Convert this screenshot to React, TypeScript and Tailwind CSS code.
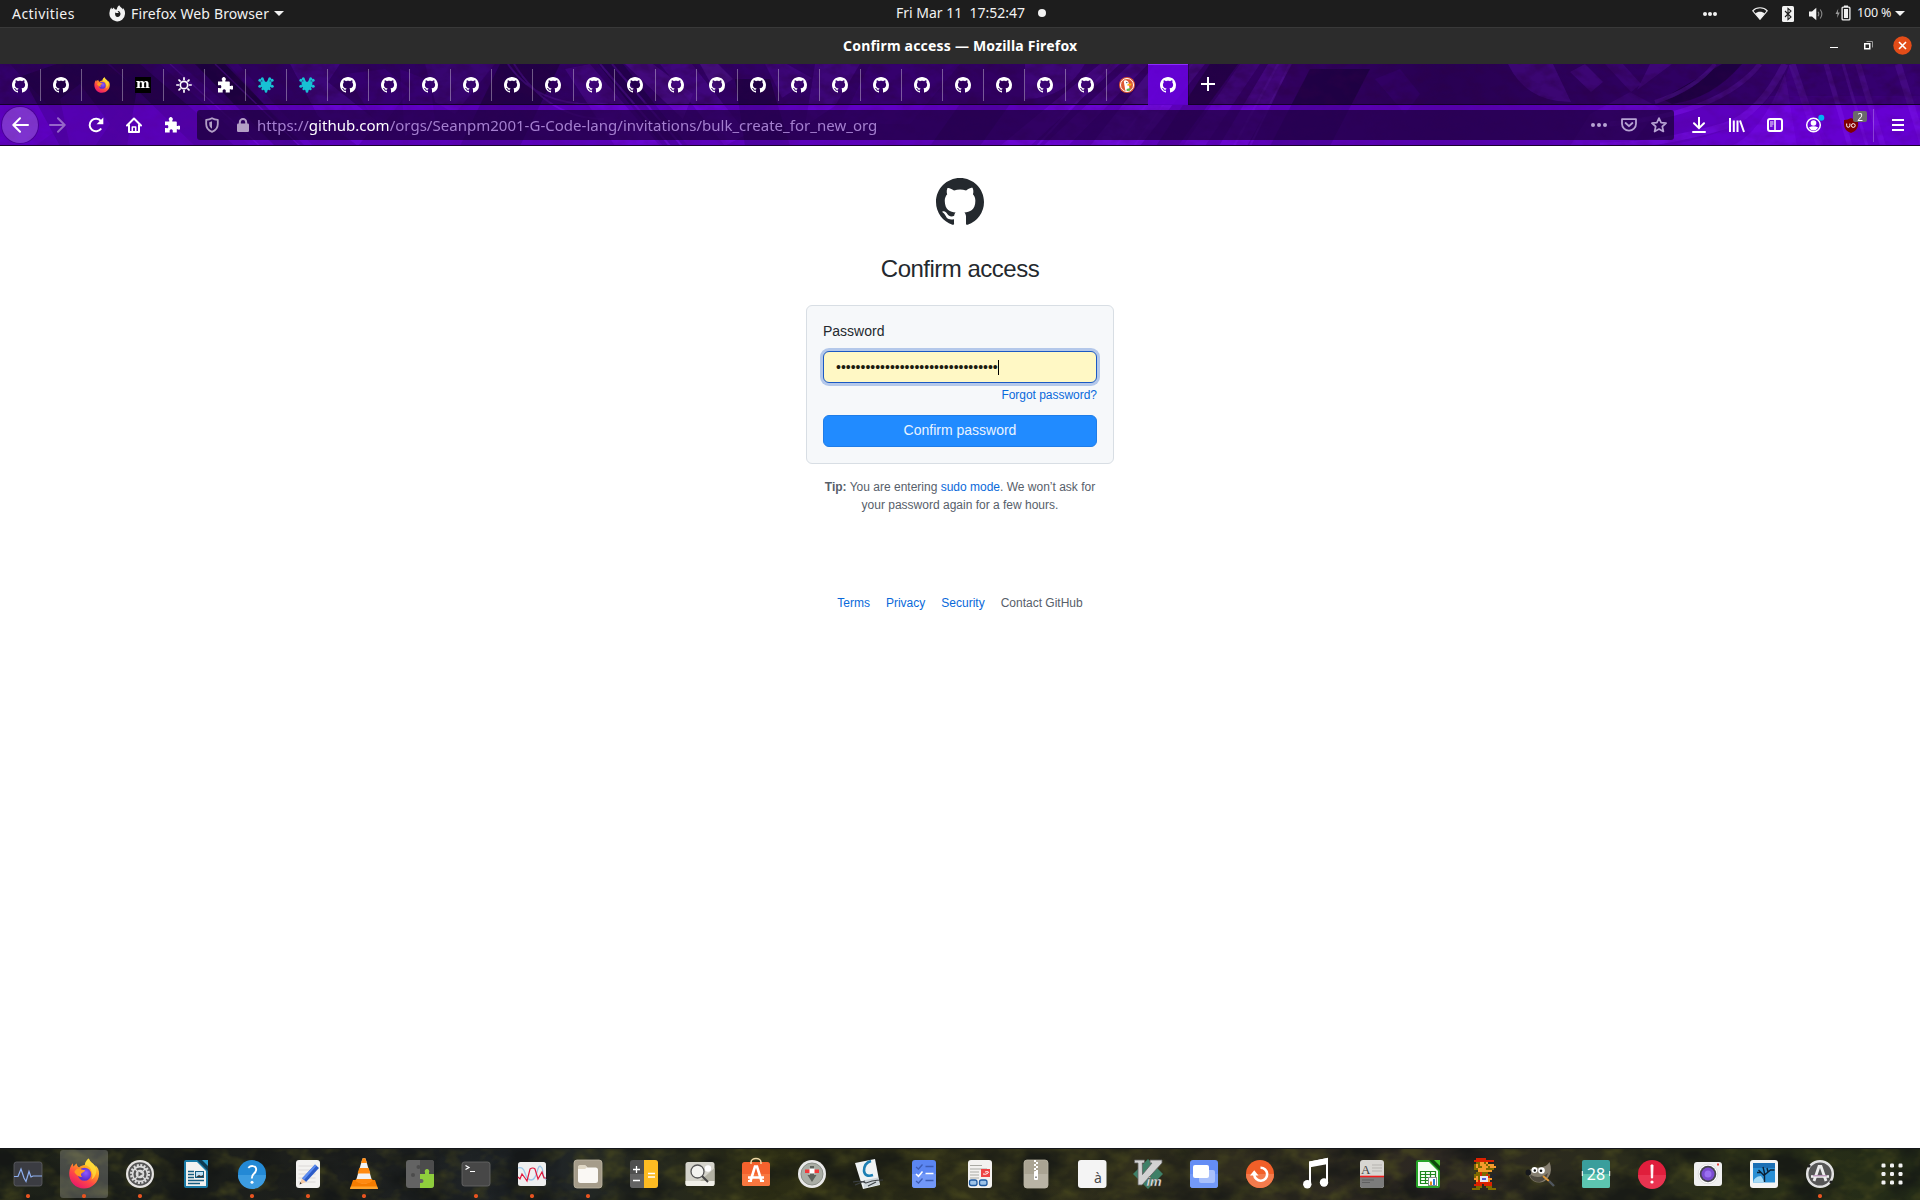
import React from "react";

const MARK =
  "M8 0C3.58 0 0 3.58 0 8c0 3.54 2.29 6.53 5.47 7.59.4.07.55-.17.55-.38 0-.19-.01-.82-.01-1.49-2.01.37-2.53-.49-2.69-.94-.09-.23-.48-.94-.82-1.13-.28-.15-.68-.52-.01-.53.63-.01 1.08.58 1.23.82.72 1.21 1.87.87 2.33.66.07-.52.28-.87.51-1.07-1.78-.2-3.64-.89-3.64-3.95 0-.87.31-1.59.82-2.15-.08-.2-.36-1.02.08-2.12 0 0 .67-.21 2.2.82.64-.18 1.32-.27 2-.27.68 0 1.36.09 2 .27 1.53-1.04 2.2-.82 2.2-.82.44 1.1.16 1.92.08 2.12.51.56.82 1.27.82 2.15 0 3.07-1.87 3.75-3.65 3.95.29.25.54.73.54 1.48 0 1.07-.01 1.93-.01 2.2 0 .21.15.46.55.38A8.013 8.013 0 0016 8c0-4.42-3.58-8-8-8z";

const PUZZLE =
  "M1 4.5h4.3V3.4a2 2 0 1 1 3 0v1.1H12a.8.8 0 0 1 .8.8V9h.9a2 2 0 1 1 0 3.2h-.9v3.3H8.7v-1a1.6 1.6 0 1 0-3 0v1H1v-4.4h1.3a1.5 1.5 0 1 0 0-2.8H1z";

function GitHubMark({ size, color }: { size: number; color: string }) {
  return (
    <svg width={size} height={size} viewBox="0 0 16 16" fill={color}>
      <path fillRule="evenodd" d={MARK} />
    </svg>
  );
}

function Puzzle() {
  return (
    <svg width="16" height="16" viewBox="0 0 16 16" fill="#fff">
      <path d={PUZZLE} />
    </svg>
  );
}

function FirefoxLogo({ size }: { size: number }) {
  return (
    <svg width={size} height={size} viewBox="0 0 32 32">
      <defs>
        <linearGradient id="fx-body" x1=".85" y1="0" x2=".25" y2="1">
          <stop offset="0" stopColor="#fff44f" />
          <stop offset=".35" stopColor="#ffa51f" />
          <stop offset=".65" stopColor="#ff4a45" />
          <stop offset="1" stopColor="#e5126f" />
        </linearGradient>
        <radialGradient id="fx-core" cx=".6" cy=".4">
          <stop offset="0" stopColor="#9059ff" />
          <stop offset="1" stopColor="#5b2fd0" />
        </radialGradient>
      </defs>
      <path
        d="M30.6 11.2c-.8-1.7-1.8-2.9-3-3.7.4 1 .6 1.700.7 2.300-1.900-4.300-6.300-5.300-7.300-9.300-2.500 1.500-3.900 4.500-4.100 6.700-2.300.1-4.300.9-5.700 2.300-1.700-.2-2.500-1.900-2.700-3.900-1.300.7-2.600 2.100-3.300 3.300-.6-.7-.6-3.100-.6-3.500C2.400 7.300 1 11.200.7 15.500.3 24.300 7.200 31.600 16 31.600c8.500 0 15.300-6.600 15.500-15 .1-1.900-.2-3.800-.9-5.400z"
        fill="url(#fx-body)"
      />
      <circle cx="16.500" cy="16.800" r="6.800" fill="url(#fx-core)" />
      <path
        d="M6 14.500c1.500-3.200 4.200-4.200 6.400-3.200 1.400.6 2.300 1.200 4.600 1.200.2 1.500-2 2.300-3.500 3.200-1 .9-.8 2.800.5 3.800-3 .4-6-1.500-8-5z"
        fill="#ff9a1f"
      />
      <path d="M21 .5c-2.500 1.500-3.900 4.500-4.100 6.700 3.600.5 6.600 3.300 7 7.300 1.500 2.600.9 6-.4 7.800 4.500-2 6-8 4.800-12.500C26.400 5.500 22 4.500 21 .5z" fill="#ffe03a" opacity=".75" />
    </svg>
  );
}

function Splat() {
  return (
    <svg width="16" height="16" viewBox="0 0 16 16" fill="#17c1d4">
      <path d="M2.500 4.200L8 4.800l5.500-.6-.3 5-2.200 2.800L8 15l-3-3-2.200-2.800z" />
      <circle cx="1.900" cy="3.300" r="1.500" />
      <circle cx="4.300" cy="1.800" r="1.500" />
      <circle cx="14.100" cy="3.300" r="1.500" />
      <circle cx="11.700" cy="1.800" r="1.500" />
      <path d="M4 2h1.800l1.500 3.500H4.500zM12 2h-1.800L8.700 5.500h2.800z" />
      <circle cx="1.800" cy="9.300" r="1.500" />
      <circle cx="14.200" cy="9.300" r="1.500" />
      <circle cx="4.600" cy="12" r="1.200" />
      <circle cx="11.400" cy="12" r="1.200" />
      <circle cx="8" cy="14.500" r="1.300" />
    </svg>
  );
}

function Sun() {
  return (
    <svg width="16" height="16" viewBox="0 0 16 16" fill="none" stroke="#fff" strokeWidth="1.700">
      <circle cx="8" cy="8" r="3.700" />
      <path d="M8 .2v3M8 12.800v3M.2 8h3M12.800 8h3M2.500 2.500l2.100 2.100M11.400 11.400l2.100 2.100M13.500 2.500l-2.100 2.100M4.600 11.400l-2.100 2.100" />
    </svg>
  );
}

function Duck() {
  return (
    <svg width="16" height="16" viewBox="0 0 16 16">
      <circle cx="8" cy="8" r="8" fill="#de5833" />
      <circle cx="8" cy="8" r="6.500" fill="none" stroke="#fff" strokeWidth="1" />
      <path d="M4.800 4.500C5 2.500 9.300 2.600 9.700 5.800l.8 5.700-1.500 2.300-2.700-.3z" fill="#fff" />
      <path d="M8.500 7l4-.5-.3 1.900-3.700.4z" fill="#fdb813" />
      <path d="M7.500 12l4-1-.5 2.600-3 .3z" fill="#54b649" />
      <circle cx="7.800" cy="5.600" r=".7" fill="#234" />
    </svg>
  );
}

function Favicon({ i }: { i: number }) {
  if (i === 2) return <FirefoxLogo size={16} />;
  if (i === 3)
    return (
      <span className="flex h-4 w-4 items-center justify-center bg-black pb-[3px] font-['DejaVu_Serif',serif] text-[13px] leading-none font-bold text-white">
        m
      </span>
    );
  if (i === 4) return <Sun />;
  if (i === 5) return <Puzzle />;
  if (i === 6 || i === 7) return <Splat />;
  if (i === 27) return <Duck />;
  return <GitHubMark size={16} color="#fff" />;
}

function TopBar() {
  return (
    <div className="grid h-7 grid-cols-[1fr_auto_1fr] items-center border-b border-[#393939] bg-[#1d1d1d] text-[14px] text-[#f2f2f2]">
      <div className="flex items-center pl-3">
        <span className="w-[97px] tracking-[0.45px]">Activities</span>
        <svg width="17" height="17" viewBox="0 0 17 17" className="mt-[-1px] shrink-0" fill="#f2f2f2">
          <path
            fillRule="evenodd"
            d="M10.300.2c.3 1.600 2.600 2.300 3.700 4.200l-.1-1.300c1.600 1.300 2.300 3.500 2.100 5.900a7.800 7.800 0 1 1-15.300-2.500C.9 5 1.500 3.500 2.500 2.600l.4 1.700L5 2.500c.1 1 .5 1.900 1.500 2l1.300.1c.2-1.800 1-3.600 2.500-4.400zM6.300 7.600c-.5 1.500-.2 4.200 2.300 4.300 2.500 0 3.500-2.500 2.500-4.500-.6-1-1.500-1.400-2.600-1.300l1.300 1.300c-.8.8-1.700 1-3.500.2z"
          />
        </svg>
        <span className="ml-[5px] w-[137px] tracking-[0.14px] whitespace-nowrap">Firefox Web Browser</span>
        <span className="ml-[6px] border-x-[5px] border-t-[5px] border-x-transparent border-t-[#f2f2f2]" />
      </div>
      <div className="flex items-center pb-[2px] pl-[22px]">
        <span className="w-[129px] whitespace-pre">Fri Mar 11  17:52:47</span>
        <span className="ml-[13px] h-2 w-2 rounded-full bg-[#f2f2f2]" />
      </div>
      <div className="flex items-center justify-end pr-[15px]">
        <svg width="14" height="4" viewBox="0 0 14 4" className="mr-[35px]" fill="#f2f2f2">
          <circle cx="2" cy="2" r="2" />
          <circle cx="7" cy="2" r="2" />
          <circle cx="12" cy="2" r="2" />
        </svg>
        <svg width="16" height="13" viewBox="0 0 16 13" className="mr-[14px]" fill="#f2f2f2">
          <path d="M.7 3.800C4.500-.2 11.500-.2 15.300 3.800L8 12.300z" fill="none" stroke="#f2f2f2" strokeWidth="1.100" />
          <path d="M3.300 6.400c2.500-2.200 6.900-2.200 9.400 0L8 12.500z" />
        </svg>
        <svg width="12" height="16" viewBox="0 0 12 16" className="mr-[15px]">
          <rect width="12" height="16" rx="1.500" fill="#f2f2f2" />
          <path d="M3 5l6 6-3 2.600V2.400L9 5l-6 6" fill="none" stroke="#1d1d1d" strokeWidth="1.100" />
        </svg>
        <svg width="15" height="14" viewBox="0 0 15 14" className="mr-[11px]">
          <path d="M0 4.500h3L7.300.8v12.400L3 9.500H0z" fill="#f2f2f2" />
          <path d="M9 4.800q1.600 2.200 0 4.400M11.200 2.500q3.300 4.500 0 9" fill="none" stroke="#8a8a8a" strokeWidth="1.100" />
        </svg>
        <svg width="16" height="16" viewBox="0 0 16 16" className="mt-[-2px] mr-[6px]">
          <path d="M3.300 3.500L.5 9h2l-.5 4 2.800-5.500h-2z" fill="#999" />
          <rect x="7.100" y="2.100" width="7.800" height="12.800" rx="1" fill="none" stroke="#f2f2f2" strokeWidth="1.300" />
          <path d="M9 4h4v9H9zM9 .5h4V2H9z" fill="#f2f2f2" />
        </svg>
        <span className="mr-[5px] w-[33px] text-[12.500px] tracking-[-0.2px] whitespace-nowrap">100 %</span>
        <span className="border-x-[5px] border-t-[5px] border-x-transparent border-t-[#f2f2f2]" />
      </div>
    </div>
  );
}

function TitleBar() {
  return (
    <div className="grid h-9 grid-cols-[1fr_auto_1fr] items-center bg-[#2c2c2c] pb-[2px] text-[14px] font-bold text-white">
      <span />
      <span className="w-[234px] text-center tracking-[0.2px] whitespace-nowrap">Confirm access — Mozilla Firefox</span>
      <div className="flex items-center justify-end pr-2">
        <span className="mt-[5px] mr-[26px] h-px w-2 bg-white" />
        <svg width="9" height="9" viewBox="0 0 9 9" className="mr-[20px]" fill="none">
          <path d="M2.500.5h6v6" stroke="#999" />
          <rect x=".75" y="2.750" width="5" height="5" stroke="#fff" strokeWidth="1.500" />
        </svg>
        <svg width="19" height="19" viewBox="0 0 19 19">
          <circle cx="9.500" cy="9.500" r="9.200" fill="#e34c18" />
          <path d="M6 6l7 7M13 6l-7 7" stroke="#fff" strokeWidth="1.600" />
        </svg>
      </div>
    </div>
  );
}

/* Carved-stone artwork behind the tab strip and the toolbar. */
function ThemeArt() {
  const shades: [string, string, number][] = [
    ["M0 0h10l55 60-30 22H0z", "#7a00ff", 0.3],
    ["M22 12l35-12 50 0 30 25-10 57H60z", "#200050", 0.45],
    ["M60 35l20-15 30 40-15 22H70z", "#7a00ff", 0.25],
    ["M110 0h30l95 82h-40z", "#2a0060", 0.5],
    ["M160 0h20l95 82h-25z", "#7a00ff", 0.25],
    ["M195 0h30l80 82h-30z", "#15003a", 0.5],
    ["M228 0h10l75 82h-12z", "#7a00ff", 0.3],
    ["M290 0h50l-12 18 50 40-20 24-40-30z", "#8010ff", 0.55],
    ["M345 10l40-5 25 20-30 40z", "#7a00ff", 0.35],
    ["M400 5l30 12 5 40-30 15z", "#7a00ff", 0.35],
    ["M425 0h70l-40 50-20-12z", "#8510ff", 0.35],
    ["M500 0h60l-40 82h-60z", "#15003a", 0.4],
    ["M565 5l25-5 70 82h-45z", "#8510ff", 0.6],
    ["M598 0h25l65 82h-25z", "#20005a", 0.45],
    ["M625 0h28l40 30-10 25z", "#9020ff", 0.6],
    ["M660 0h32l55 70-22 12z", "#8510ff", 0.6],
    ["M700 0h18l15 15-18 12z", "#9a30ff", 0.5],
    ["M735 15l35 0 20 67h-45z", "#15003a", 0.45],
    ["M765 0h22l25 14-30 20z", "#8510ff", 0.5],
    ["M815 0h45l-25 42-30 20z", "#8510ff", 0.5],
    ["M870 0h90l-50 60h-70z", "#7a00ff", 0.25],
    ["M960 40l50 0-30 42h-50z", "#15003a", 0.4],
    ["M1025 0h60q-20 35-60 35z", "#8510ff", 0.5],
    ["M1100 0h20l-90 82h-30z", "#8a18ff", 0.6],
    ["M1130 0h18l-80 82h-25z", "#8a18ff", 0.55],
    ["M1155 0h50l-65 82h-50z", "#8a18ff", 0.65],
    ["M1210 0h28l-60 82h-22z", "#15003a", 0.4],
    ["M1240 0h20l-55 82h-22z", "#8a18ff", 0.4],
    ["M1268 0h24l-45 82h-28z", "#8a18ff", 0.6],
    ["M1310 5l60 0-40 77h-60z", "#1a0048", 0.45],
    ["M1375 15l25-10 20 25-15 20z", "#7a00ff", 0.22],
    ["M1508 0h45l18 38q-45 0-63-38z", "#8a18ff", 0.5],
    ["M1570 8l15-8 18 18-12 10z", "#8a18ff", 0.5],
    ["M1605 0h18l18 20-10 8z", "#8a18ff", 0.4],
    ["M1650 0h22l-35 26z", "#8a18ff", 0.5],
    ["M1590 50l40-22 30 16-30 38h-60z", "#8a18ff", 0.3],
    ["M1662 35l60-35h20q-30 35-70 40z", "#15003a", 0.5],
    ["M1790 0l40 82h-75l20-40z", "#7f08ff", 0.5],
    ["M1730 82q30-10 55-72l12 72z", "#8a18ff", 0.6],
    ["M1660 82q80-10 110-50l150 0v50z", "#8000ff", 0.4],
  ];
  const lines: [string, number][] = [
    ["M1785 0q-25 50-60 62-70 20-125 20", 7],
    ["M1760 0q-40 50-150 60", 5],
    ["M1715 0q-20 25-60 38", 4],
    ["M1792 0l28 82", 7],
    ["M1826 0l24 82", 5],
    ["M1843 0l24 82", 3],
    ["M1858 0l25 82", 6],
    ["M1898 0l26 82", 7],
    ["M600 0l70 82M612 0l70 82", 2],
    ["M1112 0l-75 82M1176 0l-60 82M1192 0l-58 82", 2],
    ["M1290 0l-40 82M1278 0l-44 82", 2],
    ["M170 0l90 82M215 0l85 82", 1.5],
    ["M508 0q30 45 100 40M514 0q35 55 90 55", 2],
  ];
  return (
    <svg className="absolute inset-0" width="1920" height="82" viewBox="0 0 1920 82" preserveAspectRatio="none">
      <defs>
        <linearGradient id="theme-base">
          <stop offset="0" stopColor="#5000a8" />
          <stop offset=".35" stopColor="#5800b6" />
          <stop offset=".68" stopColor="#5a00b0" />
          <stop offset=".75" stopColor="#4a0096" />
          <stop offset="1" stopColor="#6400d0" />
        </linearGradient>
        <filter id="theme-grain" x="0" y="0" width="100%" height="100%">
          <feTurbulence type="fractalNoise" baseFrequency=".06 .09" numOctaves="3" seed="7" />
          <feColorMatrix values="0 0 0 0 .08  0 0 0 0 0  0 0 0 0 .22  2.600 0 0 0 -1" />
        </filter>
        <filter id="theme-soft">
          <feGaussianBlur stdDeviation=".7" />
        </filter>
      </defs>
      <rect width="1920" height="82" fill="url(#theme-base)" />
      <g filter="url(#theme-soft)">
        {shades.map(([d, fill, o]) => (
          <path key={d} d={d} fill={fill} opacity={o} />
        ))}
        {lines.map(([d, w]) => (
          <path key={d} d={d} fill="none" stroke="#8c1cff" strokeWidth={w} opacity=".6" />
        ))}
      </g>
      <rect width="1920" height="82" filter="url(#theme-grain)" opacity=".45" />
    </svg>
  );
}

function TabStrip() {
  return (
    <div className="relative flex h-[41px] items-stretch border-b border-[#14002b] bg-black/45">
      {Array.from({ length: 29 }, (_, i) =>
        i === 28 ? (
          <div key={i} className="-mb-px flex w-10 items-center justify-center border-t border-[#8c2cff] bg-[#6a00e2]/85">
            <Favicon i={i} />
          </div>
        ) : (
          <div key={i} className="flex w-[41px] items-center pt-[2px]">
            <span className="flex w-10 justify-center">
              <Favicon i={i} />
            </span>
            {i < 27 && <span className="h-8 w-px bg-white/35" />}
          </div>
        )
      )}
      <div className="flex w-[39px] items-center justify-center border-l border-black/30">
        <svg width="14" height="14" viewBox="0 0 14 14" stroke="#fff" strokeWidth="2">
          <path d="M7 0v14M0 7h14" />
        </svg>
      </div>
    </div>
  );
}

function NavBar() {
  const cell = "flex h-9 w-[38px] items-center justify-center";
  return (
    <div className="relative flex h-[41px] items-center border-b border-[#1a0030] bg-[#6000c4]/50">
      <div className="ml-[2px] flex h-9 w-9 items-center justify-center rounded-full bg-white/20 ring-1 ring-black/20">
        <svg width="17" height="16" viewBox="0 0 17 16" fill="none" stroke="#fff" strokeWidth="2" strokeLinecap="round" strokeLinejoin="round">
          <path d="M16 8H1.500M8 1.300L1.300 8 8 14.700" />
        </svg>
      </div>
      <div className={cell}>
        <svg width="17" height="16" viewBox="0 0 17 16" fill="none" stroke="#fff" strokeOpacity=".4" strokeWidth="2" strokeLinecap="round" strokeLinejoin="round">
          <path d="M1 8h14.500M9 1.300L15.700 8 9 14.700" />
        </svg>
      </div>
      <div className={cell + " ml-px"}>
        <svg width="16" height="16" viewBox="0 0 16 16" fill="none" stroke="#fff" strokeWidth="2">
          <path d="M13.200 11.500A6.300 6.300 0 1 1 13 4.200" />
          <path d="M15.300.5v6.700H8.600z" fill="#fff" stroke="none" />
        </svg>
      </div>
      <div className={cell}>
        <svg width="16" height="16" viewBox="0 0 16 16" fill="none" stroke="#fff" strokeWidth="2" strokeLinejoin="round">
          <path d="M1 8.500l7-7 7 7M3 7.500V15h10V7.500" strokeLinecap="round" />
          <path d="M6.300 15v-5h3.400v5" strokeWidth="1.500" />
        </svg>
      </div>
      <div className={cell}>
        <Puzzle />
      </div>
      <div className="ml-[6px] flex h-[30px] w-[1477px] items-center rounded-[3px] bg-[#120028]/65">
        <svg width="14" height="16" viewBox="0 0 14 16" className="ml-[8px]" fill="none" stroke="#b39fc6">
          <path d="M1.200 2.800q3.200 0 5.800-1.600 2.600 1.600 5.800 1.600V7c0 3.500-2 6.300-5.800 7.800C3.200 13.300 1.200 10.500 1.200 7z" strokeWidth="1.800" strokeLinejoin="round" />
          <path d="M7 4.300Q5.700 5 4.300 5.200V7c0 2 .8 3.600 2.700 4.700z" fill="#b39fc6" stroke="none" />
        </svg>
        <svg width="12" height="14" viewBox="0 0 12 14" className="ml-[18px]" fill="#b39fc6">
          <rect y="5.500" width="12" height="8.500" rx="1.200" />
          <path d="M2.800 6.500V4.200a3.200 3.200 0 0 1 6.400 0v2.300" fill="none" stroke="#b39fc6" strokeWidth="2" />
        </svg>
        <span className="ml-[8px] flex-1 text-[15px] tracking-[0.02px] whitespace-nowrap text-[#a57fd0]">
          https://<span className="text-white">github.com</span>/orgs/Seanpm2001-G-Code-lang/invitations/bulk_create_for_new_org
        </span>
        <svg width="16" height="4" viewBox="0 0 16 4" fill="#b7a3d3">
          <circle cx="2" cy="2" r="2" />
          <circle cx="8" cy="2" r="2" />
          <circle cx="14" cy="2" r="2" />
        </svg>
        <svg width="16" height="14" viewBox="0 0 16 14" className="ml-[14px]" fill="none" stroke="#b7a3d3" strokeWidth="1.800" strokeLinecap="round" strokeLinejoin="round">
          <path d="M1 1.200h14v4.500a7 7 0 0 1-14 0z" />
          <path d="M4.600 5L8 8.200 11.400 5" />
        </svg>
        <svg width="16" height="16" viewBox="0 0 16 16" className="mr-[7px] ml-[14px]" fill="none" stroke="#b7a3d3" strokeWidth="1.700" strokeLinejoin="round">
          <path d="M8 1.100l2.100 4.600 5 .5-3.800 3.300 1.100 5L8 12l-4.400 2.500 1.100-5L.9 6.200l5-.5z" />
        </svg>
      </div>
      <div className="ml-[6px] flex">
        <div className={cell}>
          <svg width="14" height="16" viewBox="0 0 14 16" fill="none" stroke="#fff" strokeWidth="2">
            <path d="M7 0v11M2 6.200l5 5 5-5M1 14.900h12" strokeLinecap="round" />
          </svg>
        </div>
        <div className={cell}>
          <svg width="16" height="15" viewBox="0 0 16 15" fill="none" stroke="#fff" strokeWidth="2">
            <path d="M1 0v14M4.800 2.500V14M8.500 2.500V14M11 2.500L15 14" />
          </svg>
        </div>
        <div className={cell}>
          <svg width="16" height="14" viewBox="0 0 16 14" fill="none" stroke="#fff">
            <rect x="1" y="1" width="14" height="12" rx="2" strokeWidth="2" />
            <path d="M8 1v12" strokeWidth="1.500" />
            <path d="M3 4h3.500M3 6h3.500M3 8h2.500" />
          </svg>
        </div>
        <div className={cell}>
          <svg width="22" height="20" viewBox="0 0 22 20" className="mb-[4px] ml-[3px] overflow-visible">
            <circle cx="9.500" cy="12" r="6.800" fill="none" stroke="#fff" strokeWidth="1.500" />
            <circle cx="9.500" cy="10" r="2.800" fill="#fff" />
            <path d="M4.800 14.500q4.700-2.500 9.400 0-1.800 3-4.700 3t-4.700-3z" fill="#fff" />
            <circle cx="17.300" cy="4.700" r="3" fill="#00b3f4" />
          </svg>
        </div>
        <div className={cell + " relative"}>
          <svg width="14" height="15" viewBox="0 0 14 15">
            <path d="M7 0q3 2 7 2v5q0 5-7 8-7-3-7-8V2q4 0 7-2z" fill="#800000" />
            <path d="M2.700 5.500v2.200q0 1.600 1.600 1.600t1.600-1.600V5.500" stroke="#fff" fill="none" />
            <circle cx="9.300" cy="7.500" r="1.900" stroke="#fff" fill="none" />
          </svg>
          <span className="absolute top-[4px] left-[21px] flex h-[11px] w-[14px] items-center justify-center rounded-[2px] bg-[#6b6b6b] text-[10px] leading-none text-white">
            2
          </span>
        </div>
      </div>
      <span className="ml-[3px] h-[33px] w-px bg-white/25" />
      <svg width="12" height="12" viewBox="0 0 12 12" className="ml-[18px]" stroke="#fff" strokeWidth="2">
        <path d="M0 1h12M0 6h12M0 11h12" />
      </svg>
    </div>
  );
}

function Page() {
  return (
    <main className="flex flex-1 flex-col items-center bg-white pt-8 font-['Liberation_Sans',Arial,sans-serif] text-[#24292e]">
      <GitHubMark size={48} color="#24292e" />
      <h1 className="mt-[25px] h-9 text-[24px] leading-9 tracking-[-0.5px]">Confirm access</h1>
      <form className="mt-[18px] flex w-[308px] flex-col rounded-[6px] border border-[#d8dee4] bg-[#f6f8fa] p-4">
        <label className="text-[14px] leading-[18px]">Password</label>
        <div className="mt-[11px] flex h-8 items-center rounded-[6px] border border-[#1b59c4] bg-[#fff8c5] px-3 text-[14px] text-[#1c1c10] shadow-[0_0_0_3px_#b4c8ea]">
          <span>{"•".repeat(33)}</span>
          <span className="h-[15px] w-px bg-black" />
        </div>
        <a className="mt-[3px] self-end text-[12px] leading-[18px] tracking-[-0.03px] text-[#0969da]">Forgot password?</a>
        <button type="button" className="mt-[11px] h-8 rounded-[6px] border border-[#1f7de8] bg-[#218bff] pb-[2px] text-[14px] leading-5 text-[#e9f3ff]">
          Confirm password
        </button>
      </form>
      <div className="mt-[14px] flex flex-col items-center text-[12px] leading-[18px] text-[#57606a]">
        <p>
          <b>Tip:</b> You are entering <a className="text-[#0969da]">sudo mode</a>. We won’t ask for
        </p>
        <p>your password again for a few hours.</p>
      </div>
      <footer className="mt-20 flex gap-4 text-[12px] leading-[18px] text-[#0969da]">
        <a>Terms</a>
        <a>Privacy</a>
        <a>Security</a>
        <a className="text-[#57606a]">Contact GitHub</a>
      </footer>
    </main>
  );
}

const MARIO = [
  "..RRRRR.....",
  ".RRRRRRRRRR.",
  "..BBSSBS....",
  ".BSBSSSBSSS.",
  ".BSBBSSSBSSS",
  ".BBSSSSBBBB.",
  "...SSSSSSS..",
  "..BBRBBB....",
  ".BBBRBBRB.KK",
  ".BSBWWWWRKK.",
  ".SSBWUUWSS..",
  "..SRWWWWSK..",
  "..RRRRRRRR..",
  ".RRRR.RRRR..",
  "..BBB..BBB..",
  "BBBB....BBBB",
];
const MARIO_COLORS: Record<string, string> = { R: "#dc2100", B: "#7d6b00", S: "#f59a2c", W: "#e8e8f4", U: "#5560d0", K: "#22252c" };

const paper = "#f3f2f0";

const DOCK: { name: string; running?: boolean; art: React.ReactNode }[] = [
  {
    name: "power",
    running: true,
    art: (
      <>
        <rect x="10" y="12" width="28" height="24" rx="2.500" fill="#3b3c42" stroke="#5f6066" strokeWidth=".8" />
        <path d="M10 26.500h4l3-7.500 3 9 2 3.500 3-10 2 5.500 2-1h9" fill="none" stroke="#8fb0f0" strokeWidth="1.200" />
      </>
    ),
  },
  {
    name: "firefox",
    running: true,
    art: (
      <g transform="translate(8.500 8)">
        <FirefoxLogo size={31} />
      </g>
    ),
  },
  {
    name: "settings",
    running: true,
    art: (
      <>
        <circle cx="24" cy="24" r="14" fill="#e6e4e2" />
        <circle cx="24" cy="24" r="11.800" fill="#555" />
        <circle cx="24" cy="24" r="8.800" fill="none" stroke="#dcdcdc" strokeWidth="2.400" strokeDasharray="2 1.456" />
        <circle cx="24" cy="24" r="7.400" fill="none" stroke="#dcdcdc" strokeWidth="1.600" />
        <circle cx="24" cy="24" r="4.300" fill="#dcdcdc" />
        <path d="M19 19l3 3M29 19l-3 3M19 29l3-3M29 29l-3-3" stroke="#dcdcdc" strokeWidth="1.200" />
        <path d="M22.500 21.500l4.300 2.500-4.300 2.500z" fill="#555" />
      </>
    ),
  },
  {
    name: "writer",
    art: (
      <>
        <path d="M14 10h22v26a2 2 0 0 1-2 2H14a2 2 0 0 1-2-2V12a2 2 0 0 1 2-2z" fill="#1b7aa5" />
        <path d="M14 12h11l9 9v15H14z" fill={paper} />
        <path d="M25 10h11v11z" fill="#0c3a52" />
        <path d="M30 10h6v6z" fill="#2a9ccc" />
        <path d="M16 21.500h6M16 24.500h6M16 27.500h6M16 30.500h16M16 33.500h12" stroke="#155c80" strokeWidth="1.300" />
        <rect x="23.500" y="21.500" width="8" height="6" fill="#bfe0f5" stroke="#155c80" />
        <path d="M24 27l3-2 2 1 2-1v2z" fill="#333" />
      </>
    ),
  },
  {
    name: "help",
    running: true,
    art: (
      <>
        <circle cx="24" cy="24" r="14" fill="#2389d5" />
        <path d="M10 25a14 14 0 0 0 28 0z" fill="#3c9ce0" />
        <path d="M20.300 17.800q2-2 4.500-1.700 3.800.5 3.300 4-.3 2-2.300 3.700-2 1.600-2 4.700" fill="none" stroke="#fff" strokeWidth="1.900" />
        <circle cx="24" cy="32.300" r="1.500" fill="#fff" />
      </>
    ),
  },
  {
    name: "editor",
    running: true,
    art: (
      <>
        <rect x="12" y="10" width="24" height="28" rx="3" fill={paper} />
        <path d="M14.500 16h17M14.500 20h17M14.500 24h17M14.500 28h17M14.500 32h17" stroke="#d4d2d0" strokeWidth=".8" />
        <path d="M31 14.500l4 3.500-13 14-4-3.500z" fill="#2b5bc7" />
        <path d="M31 14.500l1.500 1.300L20 30l-2-1.500z" fill="#5c8cf0" />
        <path d="M18 28.500l4 3.500-6.500 2.500z" fill="#f3c9a4" />
        <path d="M15.500 34.500l.8-2.500 1.400 1.500z" fill="#333" />
      </>
    ),
  },
  {
    name: "vlc",
    running: true,
    art: (
      <>
        <path d="M13 30h22l3 9H10z" fill="#f57c00" />
        <path d="M10.800 36.500h26.400L38 39H10z" fill="#ffa32b" />
        <path d="M22.500 8.500q1.500-1 3 0l6.500 22q-3.500 3-8 3t-8-3z" fill="#f2f2f2" />
        <path d="M22.500 8.500q1.500-1 3 0l1.400 4.500h-5.800zM19.300 18h9.400l1.700 5.500H17.600zM15.900 29h16.200l.5 2q-3.600 3-8.600 3t-8.600-3z" fill="#ff8a10" />
      </>
    ),
  },
  {
    name: "extensions",
    art: (
      <>
        <rect x="10" y="10" width="28" height="28" rx="3" fill="#636363" />
        <path d="M24 10h11a3 3 0 0 1 3 3v11H24z" fill="#4c4c4c" />
        <path d="M24 24h5v-1.500a2.300 2.300 0 1 1 4 0V24h5v11a3 3 0 0 1-3 3H24v-5h1.500a2 2 0 1 0 0-4H24z" fill="#8fce3c" />
        <circle cx="17" cy="25" r="2" fill="#4c4c4c" />
        <circle cx="22.500" cy="17" r="2" fill="#4c4c4c" />
      </>
    ),
  },
  {
    name: "terminal",
    running: true,
    art: (
      <>
        <rect x="10" y="12" width="28" height="24" rx="2.500" fill="#474747" stroke="#6a6a6a" strokeWidth=".8" />
        <path d="M13.500 15.500l3.500 2-3.500 2M18 21.500h5" fill="none" stroke="#fff" strokeWidth="1.200" />
      </>
    ),
  },
  {
    name: "sysmon",
    running: true,
    art: (
      <>
        <rect x="10" y="12" width="28" height="24" rx="2.500" fill="#efefef" />
        <path d="M10 18q5-2 7 5t6 7q4 0 6-8t4-5q2 1 2 8l3 5" fill="none" stroke="#9cc7e8" strokeWidth="1.300" />
        <path d="M10 27l2 2 2-5 3 4 2 3 3-12q3-2 5 0l3 10 4-7 2 6h2" fill="none" stroke="#e0163c" strokeWidth="1.200" />
      </>
    ),
  },
  {
    name: "files",
    running: true,
    art: (
      <>
        <rect x="10" y="10" width="28" height="28" rx="3" fill="#a59c8a" stroke="#bfb7a5" strokeWidth=".8" />
        <path d="M14 18a2.500 2.500 0 0 1 2.500-2.500h5l2 2h8A2.500 2.500 0 0 1 34 20v10.500a2.500 2.500 0 0 1-2.500 2.500h-15a2.500 2.500 0 0 1-2.500-2.500z" fill="#faf8f4" />
        <path d="M14 19v-2a2 2 0 0 1 2-2h5l2 2.500-2 1.500z" fill="#e0d8c6" />
      </>
    ),
  },
  {
    name: "calculator",
    art: (
      <>
        <rect x="10" y="10" width="28" height="28" rx="3" fill="#4e4e4e" />
        <path d="M10 24h14v14H13a3 3 0 0 1-3-3z" fill="#636363" />
        <path d="M24 10h11a3 3 0 0 1 3 3v22a3 3 0 0 1-3 3H24z" fill="#fdbb22" />
        <path d="M13 19.500h7M16.500 16v7M13 30.500h7M28 23.500h7M28 27h7" stroke="#fff" strokeWidth="1.300" />
      </>
    ),
  },
  {
    name: "viewer",
    art: (
      <>
        <rect x="9.500" y="12" width="29" height="24" rx="2.500" fill="#d5d4cb" />
        <path d="M9.500 31h29v3a2 2 0 0 1-2 2h-25a2 2 0 0 1-2-2z" fill="#f0efe8" />
        <path d="M24 31l14.500-13v13z" fill="#b3b2a4" />
        <circle cx="32" cy="18.500" r="3.200" fill="#fff" />
        <circle cx="21.500" cy="21.500" r="6.500" fill="#f4f4f0" stroke="#555" strokeWidth="1.300" />
        <path d="M26 26l6 6" stroke="#444" strokeWidth="2" />
      </>
    ),
  },
  {
    name: "software",
    art: (
      <>
        <rect x="10" y="12" width="28" height="24" rx="2.500" fill="#f4622d" />
        <path d="M10 24h28v10a2 2 0 0 1-2 2H12a2 2 0 0 1-2-2z" fill="#f8773f" />
        <path d="M19 14v-1.500a5 4 0 0 1 10 0V14" fill="none" stroke="#f1d9a6" strokeWidth="1.500" />
        <path d="M18.500 31L23 16.500h2L29.500 31M16 27.500h16" fill="none" stroke="#fff" strokeWidth="2.600" />
        <path d="M16 31h4M28 31h4" stroke="#fff" strokeWidth="2" />
      </>
    ),
  },
  {
    name: "usb",
    art: (
      <>
        <circle cx="24" cy="24" r="14" fill="#e9e9e9" />
        <circle cx="24" cy="24" r="11" fill="#a9ada5" stroke="#8b8f88" />
        <path d="M22 16h4v9h2.500L24 32l-4.500-7H22z" fill="#5e625c" />
        <path d="M17 19.500h14v3.500H17z" fill="#ef3b3b" />
        <path d="M21.500 18.500h5v5h-5z" fill="#fff" />
      </>
    ),
  },
  {
    name: "ocr",
    art: (
      <>
        <path d="M11 13l20-4 5 26-17 4z" fill="#f0f3f4" />
        <path d="M19 30.500l15-3 1.500 7L20 38z" fill="#cfd6da" />
        <path d="M27 11q-7 2-7 10 1 6.500 9 4" fill="none" stroke="#1d7fb4" strokeWidth="2.600" />
        <path d="M9 32q8-2 13 1l6-2q5-1 11-1M11 35l10-4M24 36l8-4" fill="none" stroke="#3c4044" strokeWidth="1.100" />
      </>
    ),
  },
  {
    name: "todo",
    art: (
      <>
        <rect x="12" y="10" width="24" height="28" rx="3" fill="#5b86f2" />
        <path d="M12 24h24v11a3 3 0 0 1-3 3H15a3 3 0 0 1-3-3z" fill="#7298f8" />
        <path d="M16 17l2.500 2 4-4.500M25.500 16.500h8M16 31l2.500 2 4-4.500M25.500 30.500h8" fill="none" stroke="#3c5cb4" strokeWidth="1.300" />
        <path d="M16 24l2.500 2.300 4-4.800M25.500 23.500h8" fill="none" stroke="#fff" strokeWidth="1.500" />
      </>
    ),
  },
  {
    name: "reader",
    art: (
      <>
        <rect x="12" y="10" width="24" height="28" rx="3" fill={paper} />
        <path d="M14 15.500h12M14 19h17M14 22h9M14 25h9M14 28h9" stroke="#a9a9a3" strokeWidth="1.100" />
        <rect x="25" y="19" width="9" height="8" fill="#ee4545" />
        <path d="M27 24q3 1 5-1t-3-1" fill="none" stroke="#fff" />
        <rect x="13.500" y="30" width="7.500" height="5.500" rx="2" fill="#9dc3e8" stroke="#1f5aa0" strokeWidth="1.300" />
        <rect x="23.500" y="30" width="7.500" height="5.500" rx="2" fill="#9dc3e8" stroke="#1f5aa0" strokeWidth="1.300" />
      </>
    ),
  },
  {
    name: "archive",
    art: (
      <>
        <rect x="12" y="10" width="24" height="28" rx="3" fill="#aaa493" stroke="#bdb7a6" strokeWidth=".8" />
        <path d="M12 24h24v11a3 3 0 0 1-3 3H15a3 3 0 0 1-3-3z" fill="#b9b4a5" />
        <path d="M23 10v12M25 12v10" stroke="#fff" strokeWidth="2" strokeDasharray="2 2" />
        <rect x="22" y="21" width="4" height="9" rx="1" fill="#fff" />
        <path d="M23.200 26.500h1.600v1.500h-1.600z" fill="#777" />
      </>
    ),
  },
  {
    name: "characters",
    art: (
      <>
        <rect x="10" y="10" width="28.500" height="28" rx="3" fill="#f4f4f4" />
        <text x="26" y="33" fontFamily="Noto Sans, sans-serif" fontSize="14" fill="#4a4a4a">
          à
        </text>
      </>
    ),
  },
  {
    name: "vim",
    art: (
      <>
        <path d="M24 9l15 15-15 15L9 24z" fill="#3e8067" />
        <path d="M10.500 10h10v3h-2.200l.2 11.500L28 13h-2v-3h12v3l-20 22h-4V13h-3.500z" fill="#d2d2d2" stroke="#5f5f5f" strokeWidth=".8" />
        <text x="22.500" y="35.500" fontFamily="Liberation Sans, sans-serif" fontSize="13" fontStyle="italic" fontWeight="bold" fill="#eee" stroke="#555" strokeWidth=".4">
          im
        </text>
      </>
    ),
  },
  {
    name: "boxes",
    art: (
      <>
        <rect x="10" y="10" width="28" height="28" rx="3" fill="#648df5" />
        <path d="M10 24h28v11a3 3 0 0 1-3 3H13a3 3 0 0 1-3-3z" fill="#7399f8" />
        <rect x="19" y="20" width="16" height="13" rx="2" fill="#a9c0fb" />
        <rect x="13" y="15" width="16" height="13" rx="2" fill="#fff" />
      </>
    ),
  },
  {
    name: "update",
    art: (
      <>
        <circle cx="24" cy="24" r="14" fill="#f15f28" />
        <path d="M10 24a14 14 0 0 0 28 0z" fill="#f47b4c" />
        <path d="M24.500 17.700a6.500 6.500 0 1 1-6.300 7" fill="none" stroke="#fff" strokeWidth="2.600" />
        <path d="M14 25.500l4.200-5.200 4.300 5.200z" fill="#fff" />
      </>
    ),
  },
  {
    name: "music",
    art: (
      <>
        <path d="M18 34V12.500L35 9v24" fill="none" stroke="#fff" strokeWidth="2" />
        <path d="M17 11.500L36 8v6l-19 3.500z" fill="#fff" />
        <circle cx="15.300" cy="34.300" r="4.200" fill="#fff" />
        <circle cx="32" cy="32.500" r="4.200" fill="#fff" />
      </>
    ),
  },
  {
    name: "scan",
    art: (
      <>
        <rect x="12" y="10" width="24" height="28" rx="3" fill="#d8d6d2" />
        <path d="M12 26.500h24V35a3 3 0 0 1-3 3H15a3 3 0 0 1-3-3z" fill="#7c7c7c" />
        <text x="13" y="23.500" fontFamily="Liberation Serif, serif" fontSize="13" fill="#444">
          A
        </text>
        <path d="M24 15h10M24 18h10M24 21h10" stroke="#b5b3af" />
        <path d="M14 30h12M14 32.500h8" stroke="#5f5f5f" />
        <path d="M12 26.500h24" stroke="#f01c1c" strokeWidth="1.600" />
      </>
    ),
  },
  {
    name: "sheets",
    art: (
      <>
        <path d="M14 10h22v26a2 2 0 0 1-2 2H14a2 2 0 0 1-2-2V12a2 2 0 0 1 2-2z" fill="#28a528" />
        <path d="M14 12h11l9 9v15H14z" fill="#f6fff4" />
        <path d="M25 10h11v11z" fill="#0c4a0c" />
        <path d="M30 10h6v6z" fill="#43c330" />
        <path d="M16.500 21.500h15v12h-15zM16.500 24.500h15M16.500 27.500h15M16.500 30.500h15M21.500 21.500v12M26.500 21.500v12" fill="none" stroke="#1d861d" strokeWidth="1.200" />
        <rect x="24.500" y="27.500" width="8" height="8" fill="#fff" stroke="#888" />
        <path d="M26 31.500h2V35h-2z" fill="#e88a1c" />
        <path d="M29 29h2v6h-2z" fill="#2a7ad0" />
      </>
    ),
  },
  {
    name: "plumber",
    art: (
      <g shapeRendering="crispEdges">
        {MARIO.flatMap((row, y) =>
          row
            .split("")
            .map((c, x) => (c === "." ? null : <rect key={`${x}-${y}`} x={12 + x * 2} y={8 + y * 2} width="2" height="2" fill={MARIO_COLORS[c]} />))
        )}
      </g>
    ),
  },
  {
    name: "gimp",
    art: (
      <>
        <path d="M11 21q8-4 13-3.500 7-1 9.500-5.500 3.500 9-1 15-3 5-8.500 5.500-8 0-10.500-6z" fill="#857e70" />
        <path d="M15 25q8 5 17-2-2 8-8.500 9-7 0-9.500-6z" fill="#4f4a40" />
        <circle cx="18.500" cy="20" r="3" fill="#fff" />
        <circle cx="25.500" cy="20.500" r="3.300" fill="#fff" />
        <circle cx="18.800" cy="20.500" r="1.200" fill="#111" />
        <circle cx="25" cy="20.800" r="1.300" fill="#111" />
        <ellipse cx="12.300" cy="22.500" rx="2.800" ry="3" fill="#16181c" />
        <path d="M27 26l6 5" stroke="#e09a3c" strokeWidth="2" />
        <path d="M33 31l5 5" stroke="#50565e" strokeWidth="2.400" />
      </>
    ),
  },
  {
    name: "calendar",
    art: (
      <>
        <rect x="10" y="10" width="28" height="28" rx="2" fill="#3a9e9c" />
        <path d="M10 24h28v12a2 2 0 0 1-2 2H12a2 2 0 0 1-2-2z" fill="#5cc5b0" />
        <path d="M10.300 21v5M37.700 21v5" stroke="#fff" />
        <text x="24" y="30" textAnchor="middle" fontFamily="Noto Sans, sans-serif" fontSize="16" fill="#fff">
          28
        </text>
      </>
    ),
  },
  {
    name: "alert",
    art: (
      <>
        <circle cx="24" cy="24" r="14" fill="#e01e3c" />
        <path d="M10 25a14 14 0 0 0 28 0z" fill="#e93350" />
        <path d="M23 15h2l-.4 13h-1.200z" fill="#fff" stroke="#fff" />
        <circle cx="24" cy="32" r="1.600" fill="#fff" />
      </>
    ),
  },
  {
    name: "camera",
    art: (
      <>
        <rect x="10" y="12" width="28" height="24" rx="3" fill="#f0f0f0" />
        <circle cx="24" cy="24" r="9.800" fill="#fff" stroke="#cfcfcf" strokeWidth=".6" />
        <circle cx="24" cy="24" r="8.300" fill="#46454e" />
        <circle cx="24" cy="24" r="6.500" fill="#7a4bd0" />
        <circle cx="24" cy="24" r="3.500" fill="#9a6ff0" />
        <path d="M33 13.500h2v2h-2z" fill="#e8453c" />
      </>
    ),
  },
  {
    name: "photos",
    art: (
      <>
        <rect x="10" y="10" width="28" height="28" rx="3" fill="#f4f4f4" />
        <rect x="13" y="13" width="22" height="19.500" fill="#2a8fd4" />
        <path d="M13 13h22v5H13z" fill="#1b6fb4" />
        <path d="M13 32.500q1-6 8-6.500l4 6.500z" fill="#a5daf5" />
        <path d="M24.500 32v-9M24.500 26l-6-6M24.500 25l6-5h4M24.500 23l-1.500-6M21 22.500h-4M28 22l-1-4" fill="none" stroke="#0c2236" strokeWidth="1.400" />
      </>
    ),
  },
  {
    name: "appimage",
    running: true,
    art: (
      <>
        <circle cx="24" cy="24" r="12.800" fill="#565656" stroke="#e2e2e2" strokeWidth="2.500" />
        <path d="M18 31l5-14.500h2L30 31" fill="none" stroke="#eee" strokeWidth="2.800" />
        <path d="M15 26.500h18" stroke="#eee" strokeWidth="2.600" />
        <path d="M17 25.800h14" stroke="#9a5a9a" strokeWidth=".8" />
        <circle cx="13" cy="16" r="1.600" fill="#222" />
        <circle cx="35" cy="32" r="1.600" fill="#222" />
      </>
    ),
  },
];

function Dock() {
  return (
    <div className="relative h-[52px] overflow-hidden border-t border-[#15171b] bg-[#22241a]">
      <svg className="absolute inset-0" width="1920" height="52">
        <defs>
          <linearGradient id="dock-tone">
            <stop offset="0" stopColor="#1d2118" />
            <stop offset=".17" stopColor="#1c1e1c" />
            <stop offset=".28" stopColor="#1f2428" />
            <stop offset=".4" stopColor="#2b2c14" />
            <stop offset=".56" stopColor="#31301b" />
            <stop offset=".75" stopColor="#2c2722" />
            <stop offset=".9" stopColor="#2a2f18" />
            <stop offset="1" stopColor="#232b17" />
          </linearGradient>
          <filter id="dock-dark" x="0" y="0" width="100%" height="100%" colorInterpolationFilters="sRGB">
            <feTurbulence type="fractalNoise" baseFrequency=".018 .03" numOctaves="4" seed="4" />
            <feColorMatrix values="0 0 0 0 .07  0 0 0 0 .08  0 0 0 0 .08  3 0 0 0 -1.200" />
          </filter>
          <filter id="dock-light" x="0" y="0" width="100%" height="100%" colorInterpolationFilters="sRGB">
            <feTurbulence type="fractalNoise" baseFrequency=".04 .06" numOctaves="3" seed="12" />
            <feColorMatrix values="0 0 0 0 .30  0 0 0 0 .30  0 0 0 0 .12  0 3 0 0 -1.300" />
          </filter>
        </defs>
        <rect width="1920" height="52" fill="url(#dock-tone)" />
        <rect width="1920" height="52" filter="url(#dock-light)" opacity=".6" />
        <rect width="1920" height="52" filter="url(#dock-dark)" opacity=".7" />
      </svg>
      <div className="relative flex items-start gap-2 pt-px pl-1">
        {DOCK.map((app) => (
          <svg
            key={app.name}
            width="48"
            height="48"
            viewBox="0 0 48 48"
            className={app.name === "firefox" ? "shrink-0 rounded-[3px] bg-white/20" : "shrink-0"}
          >
            {app.art}
            {app.running && <circle cx="24" cy="46" r="2.100" fill="#e95420" />}
          </svg>
        ))}
        <svg width="48" height="48" viewBox="0 0 48 48" className="ml-2 shrink-0" fill="#f2f2f2">
          {[15.500, 24, 32.500].flatMap((y) =>
            [23.500, 32, 40.500].map((x) => <rect key={`${x}-${y}`} x={x - 2} y={y - 2} width="4" height="4" rx="1.200" />)
          )}
        </svg>
      </div>
    </div>
  );
}

export default function App() {
  return (
    <div className="flex h-[1200px] w-[1920px] flex-col overflow-hidden bg-white font-['Noto_Sans','Open_Sans',sans-serif]">
      <TopBar />
      <TitleBar />
      <div className="relative h-[82px] shrink-0">
        <ThemeArt />
        <TabStrip />
        <NavBar />
      </div>
      <Page />
      <Dock />
    </div>
  );
}
